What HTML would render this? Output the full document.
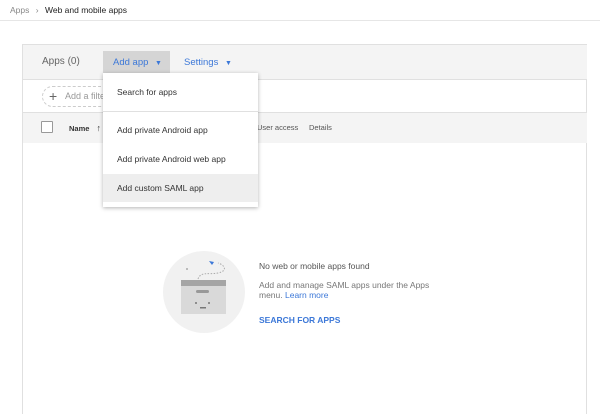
<!DOCTYPE html><html><head><style>
html,body{margin:0;width:600px;height:414px;overflow:hidden}
body{background:#fff;font-family:"Liberation Sans",sans-serif;position:relative}
.a{position:absolute}
</style></head><body>
<div class="a" style="left:10px;top:5px;font-size:8.5px;color:#888">Apps <span style="margin:0 4px">›</span> <span style="color:#222">Web and mobile apps</span></div>
<div class="a" style="left:0;top:20px;width:600px;height:1px;background:#e6e6e6"></div>
<div class="a" style="left:22px;top:44px;width:565px;height:370px;border:1px solid #e0e0e0;border-bottom:none;background:#fff;box-sizing:border-box"></div>
<div class="a" style="left:23px;top:45px;width:564px;height:34px;background:#f4f4f4;border-bottom:1px solid #e0e0e0"></div>
<div class="a" style="left:42px;top:56px;font-size:10px;color:#666">Apps (0)</div>
<div class="a" style="left:103px;top:51px;width:67px;height:22px;background:#d5d5d5"></div>
<div class="a" style="left:113px;top:57px;font-size:9.5px;color:#3c78d8">Add app <span style="font-size:7px;margin-left:4px">▼</span></div>
<div class="a" style="left:184px;top:57px;font-size:9.5px;color:#3c78d8">Settings <span style="font-size:7px;margin-left:4px">▼</span></div>
<div class="a" style="left:42px;top:86px;width:80px;height:19px;border:1px dashed #ccc;border-radius:11px"></div>
<div class="a" style="left:49px;top:88px;font-size:14px;color:#666">+</div>
<div class="a" style="left:65px;top:91px;font-size:9px;color:#999">Add a filter</div>
<div class="a" style="left:23px;top:112px;width:564px;height:30px;background:#f4f4f4;border-top:1px solid #e0e0e0"></div>
<div class="a" style="left:41px;top:121px;width:10px;height:10px;border:1px solid #999;border-radius:1px;background:#fff"></div>
<div class="a" style="left:69px;top:123px;font-size:7.5px;color:#333;font-weight:bold">Name <span style="margin-left:5px;font-size:9px">↑</span></div>
<div class="a" style="left:257px;top:123px;font-size:7.5px;color:#555">User access</div>
<div class="a" style="left:309px;top:123px;font-size:7.5px;color:#555">Details</div>
<div class="a" style="left:103px;top:73px;width:155px;height:134px;background:#fff;box-shadow:0 1px 4px rgba(0,0,0,.3)"></div>
<div class="a" style="left:117px;top:87px;font-size:8.5px;color:#333">Search for apps</div>
<div class="a" style="left:103px;top:111px;width:155px;height:1px;background:#e0e0e0"></div>
<div class="a" style="left:117px;top:125px;font-size:8.5px;color:#333">Add private Android app</div>
<div class="a" style="left:117px;top:154px;font-size:8.5px;color:#333">Add private Android web app</div>
<div class="a" style="left:103px;top:174px;width:155px;height:28px;background:#eee"></div>
<div class="a" style="left:117px;top:183px;font-size:8.5px;color:#333">Add custom SAML app</div>
<svg class="a" style="left:163px;top:251px" width="82" height="82" viewBox="0 0 82 82">
<circle cx="41" cy="41" r="41" fill="#f1f1f1"/>
<rect x="18" y="29" width="45" height="34" fill="#d9d9d9"/>
<rect x="18" y="29" width="45" height="6" fill="#a5a5a5"/>
<rect x="33" y="39" width="13" height="3" rx="1.5" fill="#999"/>
<circle cx="33" cy="52" r="1" fill="#777"/><circle cx="46" cy="52" r="1" fill="#777"/>
<rect x="37" y="56" width="6" height="1.5" fill="#777"/>
<path d="M35 28 C38 20 45 24 55 22 C65 20 62 14 55 12" fill="none" stroke="#aaa" stroke-width="1" stroke-dasharray="1.5 1.5"/>
<circle cx="24" cy="18" r="1" fill="#aaa"/>
<path d="M46 10 l5 1 -2 3 z" fill="#3c78d8"/>
</svg>
<div class="a" style="left:259px;top:261px;font-size:8.5px;color:#555">No web or mobile apps found</div>
<div class="a" style="left:259px;top:280px;font-size:8.5px;color:#777;line-height:10px;width:180px">Add and manage SAML apps under the Apps menu. <span style="color:#3c78d8">Learn more</span></div>
<div class="a" style="left:259px;top:315px;font-size:8.5px;color:#3c78d8;font-weight:bold">SEARCH FOR APPS</div>
</body></html>
